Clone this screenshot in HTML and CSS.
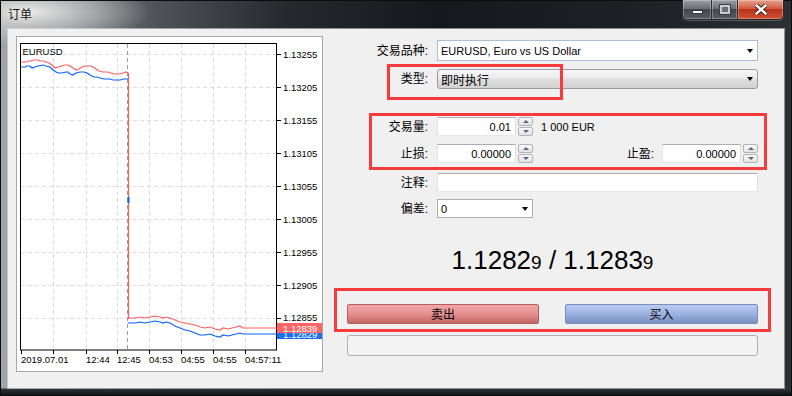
FILE: index.html
```html
<!DOCTYPE html>
<html>
<head>
<meta charset="utf-8">
<title>订单</title>
<link rel="stylesheet" href="styles.css">
</head>
<body>
<div class="window">
  <div class="titlebar">
    <span class="title">订单</span>
    <div class="caption">
      <span class="cbtn cmin"><i class="min-glyph"></i></span>
      <span class="cbtn cmax"><i class="max-glyph"></i></span>
      <span class="cbtn cclose">
        <svg width="12" height="11" viewBox="0 0 12 11"><path d="M1.5 1.5L10.5 9.5M10.5 1.5L1.5 9.5" stroke="#3a1a10" stroke-width="4.2" stroke-linecap="square"/><path d="M1.5 1.5L10.5 9.5M10.5 1.5L1.5 9.5" stroke="#fff" stroke-width="2.4" stroke-linecap="square"/></svg>
      </span>
    </div>
  </div>
  <div class="client">
    <div class="chart-panel">
      <svg class="chart" width="305" height="334" viewBox="17 37 305 334">
        <rect x="17" y="37" width="305" height="334" fill="#fff"/>
        <path class="grid" d="M21 54.5H276M21 87.5H276M21 120.5H276M21 153.5H276M21 186.5H276M21 219.5H276M21 252.5H276M21 285.5H276M21 318.5H276M53.5 44V350M86.5 44V350M117.5 44V350M149.5 44V350M181.5 44V350M213.5 44V350M245.5 44V350"/>
        <path class="sep" d="M127.5 44V350"/>
        <rect x="20.5" y="43.5" width="256" height="306.5" fill="none" stroke="#000"/>
        <path class="tick" d="M277 54.5h4M277 87.5h4M277 120.5h4M277 153.5h4M277 186.5h4M277 219.5h4M277 252.5h4M277 285.5h4M277 318.5h4M21.5 350v4M53.5 350v4M86.5 350v4M117.5 350v4M149.5 350v4M181.5 350v4M213.5 350v4M245.5 350v4"/>
        <polyline class="ask" points="21,62 26,62 28,61 31,61 33,60 38,60 40,61 44,61 46,62 49,63 52,65 55,68 58,67 62,66 65,65 68,65 70,66 73,68 76,70 79,69 82,67 86,66 90,66 93,67 96,69 99,71 103,72 108,72 111,73 114,74 120,74 123,73 126,72 128,73"/>
        <polyline class="bid" points="21,67 25,67 27,66 30,66 32,68 35,67 38,66 43,65 46,66 50,67 53,70 56,72 59,73 62,73 66,72 68,72 70,74 73,75 76,73 80,72 84,72 87,73 90,75 94,77 97,77 100,78 104,79 110,79 113,80 120,80 124,79 128,79"/>
        <path class="ask" d="M128.5 73V319"/>
        <path class="bid2" d="M128.5 197V203"/>
        <polyline class="ask" points="128,318 135,318 140,317 145,318 150,317 155,316 160,317 163,318 166,317 170,318 175,320 180,322 185,323 190,324 195,325 200,327 205,328 210,327 215,329 220,330 223,328 228,329 232,328 236,327 240,326 243,328 277,328"/>
        <polyline class="bid" points="128,323 135,323 140,322 145,323 150,322 155,321 160,322 163,323 166,322 170,323 175,326 180,328 185,330 190,331 195,333 200,335 205,335 210,334 215,336 220,337 223,335 228,336 232,335 236,334 240,333 243,334 277,334"/>
        <text class="ax" x="22.5" y="55">EURUSD</text>
        <text class="ax" x="283" y="57.5">1.13255</text>
        <text class="ax" x="283" y="90.5">1.13205</text>
        <text class="ax" x="283" y="123.5">1.13155</text>
        <text class="ax" x="283" y="156.5">1.13105</text>
        <text class="ax" x="283" y="189.5">1.13055</text>
        <text class="ax" x="283" y="222.5">1.13005</text>
        <text class="ax" x="283" y="255.5">1.12955</text>
        <text class="ax" x="283" y="288.5">1.12905</text>
        <text class="ax" x="283" y="321">1.12855</text>
        <rect x="277" y="328" width="45" height="11" fill="#1a6ff0"/>
        <text class="axw" x="283" y="337.5">1.12829</text>
        <rect x="277" y="323" width="45" height="10" fill="#ff6565"/>
        <text class="axw" x="283" y="331.5">1.12839</text>
        <text class="ax" x="21" y="363">2019.07.01</text>
        <text class="ax" x="86" y="363">12:44</text>
        <text class="ax" x="117" y="363">12:45</text>
        <text class="ax" x="149" y="363">04:53</text>
        <text class="ax" x="181" y="363">04:55</text>
        <text class="ax" x="213" y="363">04:55</text>
        <text class="ax" x="245" y="363">04:57:11</text>
      </svg>
    </div>

    <div class="form">
      <div class="row r1">
        <span class="lbl">交易品种:</span>
        <div class="combo focus"><span class="ctext">EURUSD, Euro vs US Dollar</span><i class="arrow"></i></div>
      </div>
      <div class="row r2">
        <span class="lbl">类型:</span>
        <div class="combo btnlike"><span class="ctext cjk">即时执行</span><i class="arrow"></i></div>
      </div>
      <div class="row r3">
        <span class="lbl">交易量:</span>
        <div class="ctrl">
          <div class="edit num">0.01</div>
          <div class="spin"><span class="sbtn up"></span><span class="sbtn down"></span></div>
          <span class="unit">1 000 EUR</span>
        </div>
      </div>
      <div class="row r4">
        <span class="lbl">止损:</span>
        <div class="ctrl">
          <div class="edit num">0.00000</div>
          <div class="spin"><span class="sbtn up"></span><span class="sbtn down"></span></div>
          <span class="lbl2">止盈:</span>
          <div class="edit num">0.00000</div>
          <div class="spin"><span class="sbtn up"></span><span class="sbtn down"></span></div>
        </div>
      </div>
      <div class="row r5">
        <span class="lbl">注释:</span>
        <div class="edit wide"></div>
      </div>
      <div class="row r6">
        <span class="lbl">偏差:</span>
        <div class="ctrl"><div class="combo small"><span class="ctext">0</span><i class="arrow"></i></div></div>
      </div>
      <div class="price"><span>1.1282</span><span class="psmall">9</span> / <span>1.1283</span><span class="psmall">9</span></div>
      <div class="actions">
        <button class="tbtn sell">卖出</button>
        <button class="tbtn buy">买入</button>
      </div>
      <div class="progress"></div>
    </div>

    <div class="mark m1"></div>
    <div class="mark m2"></div>
    <div class="mark m3"></div>
  </div>
</div>
</body>
</html>
```

FILE: styles.css
```css
* { box-sizing: border-box; }

body {
  margin: 0;
  background: #000;
}

.window {
  width: 792px;
  height: 396px;
  padding: 0 8px 8px;
  display: flex;
  flex-direction: column;
  font-family: "Liberation Sans", "Noto Sans CJK SC", sans-serif;
  box-shadow: inset 0 0 0 1px #0b0c0e;
  background:
    linear-gradient(0deg, #0e1012 0, #1a1d20 3px, #30343a 7px, rgba(0,0,0,0) 8px),
    radial-gradient(ellipse 120px 34px at 30px 12px, rgba(236,236,236,0.95) 0, rgba(205,205,205,0.75) 40%, rgba(150,150,150,0) 100%),
    linear-gradient(90deg, #a3a6a9 0, #84888c 6%, #4e5258 20%, #262a2f 36%, #15181c 55%, #1d2024 80%, #2c3034 100%);
}

.titlebar {
  height: 29px;
  display: flex;
  align-items: flex-start;
}

.title {
  margin-top: 7px;
  font-family: "Noto Sans CJK SC", sans-serif;
  font-size: 12px;
  line-height: 14px;
  color: #141414;
  text-shadow: 0 0 6px rgba(255,255,255,0.9);
}

.caption {
  margin-left: auto;
  display: flex;
  height: 20px;
  border: 1px solid #26292d;
  border-top: none;
  border-radius: 0 0 5px 5px;
  overflow: hidden;
  box-shadow: 0 1px 0 rgba(255,255,255,0.22);
}

.cbtn {
  height: 19px;
  display: flex;
  align-items: center;
  justify-content: center;
  box-shadow: inset 0 0 0 1px rgba(255,255,255,0.28);
}

.cmin {
  width: 29px;
  background: linear-gradient(#9a9ea3 0, #6c7076 45%, #43474d 50%, #585d63 100%);
  border-right: 1px solid #2a2d31;
}

.cmax {
  width: 26px;
  background: linear-gradient(#9a9ea3 0, #6c7076 45%, #43474d 50%, #585d63 100%);
  border-right: 1px solid #2a2d31;
}

.cclose {
  width: 45px;
  background: linear-gradient(#e6a391 0, #d35a3e 45%, #b8321b 50%, #cf5232 100%);
}

.min-glyph {
  display: block;
  width: 11px;
  height: 4px;
  margin-top: 5px;
  background: #fff;
  border: 1px solid #33363a;
}

.max-glyph {
  display: block;
  width: 10px;
  height: 9px;
  border: 2px solid #c9cbce;
  outline: 1px solid #3a3d41;
  background: #6a6e73;
}

.client {
  position: relative;
  flex: 1;
  display: flex;
  align-items: flex-start;
  background: #f0f0f0;
  box-shadow: 0 0 0 1px rgba(230,230,230,0.55);
}

.chart-panel {
  width: 307px;
  height: 336px;
  margin: 7px 0 0 8px;
  border: 1px solid #a9a9a9;
  background: #fff;
}

.chart { display: block; }

.grid {
  fill: none;
  stroke: #dcdcdc;
  stroke-width: 1;
  stroke-dasharray: 4 3;
}

.sep {
  fill: none;
  stroke: #9c9c9c;
  stroke-width: 1;
  stroke-dasharray: 4 3;
}

.tick {
  fill: none;
  stroke: #000;
  stroke-width: 1;
}

.ask {
  fill: none;
  stroke: #ff5f5f;
  stroke-width: 1.2;
}

.bid {
  fill: none;
  stroke: #0a62ff;
  stroke-width: 1.2;
}

.bid2 {
  fill: none;
  stroke: #0a62ff;
  stroke-width: 2;
}

.ax {
  font-family: "Liberation Sans", sans-serif;
  font-size: 9.5px;
  fill: #000;
}

.axw {
  font-family: "Liberation Sans", sans-serif;
  font-size: 9.5px;
  fill: #fff;
}

.form {
  margin-left: 17px;
  padding-top: 11px;
  width: 418px;
  display: flex;
  flex-direction: column;
}

.row {
  display: grid;
  grid-template-columns: 88px 321px;
  column-gap: 9px;
  align-items: center;
}

.r1 { height: 21px; }
.r2 { height: 20px; margin-top: 8px; }
.r3 { height: 19px; margin-top: 28px; }
.r4 { height: 19px; margin-top: 8px; }
.r5 { height: 19px; margin-top: 10px; }
.r6 { height: 19px; margin-top: 7px; }

.lbl, .lbl2 {
  font-size: 12px;
  line-height: 14px;
  color: #000;
  white-space: nowrap;
}

.lbl { text-align: right; }

.lbl2 {
  margin-left: auto;
  margin-right: 8px;
}

.combo {
  height: 100%;
  display: flex;
  align-items: center;
  background: #fff;
  border: 1px solid #abadb3;
  padding-left: 3px;
  font-size: 11px;
  color: #000;
}

.combo.focus { border-color: #a9bfd8; }

.combo.btnlike {
  border-color: #9a9a9a;
  border-radius: 3px;
  background: linear-gradient(#f6f6f6 0, #ececec 45%, #dfdfdf 50%, #d2d2d2 100%);
}

.combo.small { width: 96px; }

.ctext {
  flex: 1;
  white-space: nowrap;
}

.ctext.cjk { font-size: 12px; }

.arrow {
  display: block;
  margin-right: 4px;
  width: 0;
  height: 0;
  border-left: 3.5px solid transparent;
  border-right: 3.5px solid transparent;
  border-top: 4px solid #000;
}

.ctrl {
  height: 100%;
  display: flex;
  align-items: center;
}

.edit {
  height: 100%;
  background: #fff;
  border: 1px solid;
  border-color: #abadb3 #dbdfe6 #e3e9ef #e2e3ea;
  font-size: 11px;
  color: #000;
  display: flex;
  align-items: center;
}

.edit.num {
  width: 79px;
  justify-content: flex-end;
  padding-right: 4px;
}

.edit.wide { width: 321px; }

.spin {
  width: 15px;
  height: 100%;
  margin-left: 2px;
  display: flex;
  flex-direction: column;
  gap: 1px;
}

.sbtn {
  flex: 1;
  display: flex;
  align-items: center;
  justify-content: center;
  border: 1px solid #b3b3b3;
  border-radius: 2px;
  background: linear-gradient(#fafafa, #e2e2e2);
}

.sbtn.up::after {
  content: "";
  border-left: 3px solid transparent;
  border-right: 3px solid transparent;
  border-bottom: 3px solid #53668f;
}

.sbtn.down::after {
  content: "";
  border-left: 3px solid transparent;
  border-right: 3px solid transparent;
  border-top: 3px solid #53668f;
}

.unit {
  margin-left: 8px;
  font-size: 11px;
  color: #000;
  white-space: nowrap;
}

.price {
  margin-top: 27px;
  margin-left: 7px;
  width: 411px;
  height: 30px;
  line-height: 30px;
  text-align: center;
  font-size: 26px;
  color: #000;
  white-space: nowrap;
}

.psmall { font-size: 19px; }

.actions {
  margin-top: 29px;
  margin-left: 7px;
  width: 411px;
  height: 20px;
  display: flex;
  justify-content: space-between;
}

.tbtn {
  height: 20px;
  padding: 0;
  margin: 0;
  font-family: "Noto Sans CJK SC", sans-serif;
  font-size: 12px;
  line-height: 18px;
  color: #000;
  border-radius: 2px;
}

.sell {
  width: 192px;
  border: 1px solid #b45f5f;
  background: linear-gradient(#f4a6a6 0, #e48e8e 50%, #c46767 100%);
}

.buy {
  width: 193px;
  border: 1px solid #7a8dbd;
  background: linear-gradient(#b8ccf2 0, #9cb1e0 50%, #7a90c1 100%);
}

.progress {
  margin-top: 11px;
  margin-left: 7px;
  width: 411px;
  height: 21px;
  border: 1px solid #b0b0b0;
  border-radius: 3px;
  background: #f3f3f3;
}

.mark {
  position: absolute;
  border: 3px solid #f53b3b;
}

.m1 { left: 379px; top: 35px; width: 176px; height: 36px; }
.m2 { left: 361px; top: 84px; width: 398px; height: 57px; }
.m3 { left: 326px; top: 259px; width: 437px; height: 44px; }
```
